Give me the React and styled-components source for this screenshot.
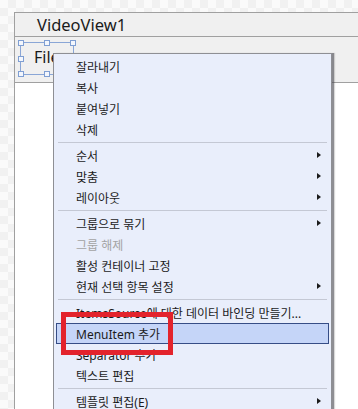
import React from 'react';
import styled, { createGlobalStyle } from 'styled-components';

const GlobalStyle = createGlobalStyle`
  html, body {
    margin: 0;
    padding: 0;
  }
  body {
    width: 358px;
    height: 409px;
    overflow: hidden;
    background-color: #fafafa;
    background-image: conic-gradient(#f1f1f1 25%, transparent 0 50%, #f1f1f1 0 75%, transparent 0);
    background-size: 16px 16px;
  }
`;

const Canvas = styled.div`
  position: relative;
  width: 358px;
  height: 409px;
  padding: 12px 0 0 14px;
  box-sizing: border-box;
  display: flex;
  overflow: hidden;
  font-family: "Noto Sans", "Noto Sans CJK KR", sans-serif;
`;

const Window = styled.div`
  flex: 1;
  display: flex;
  flex-direction: column;
  border-left: 1px solid #a0a0a0;
  border-top: 1px solid #a0a0a0;
  background: #f0f0f0;
`;

const TitleBar = styled.div`
  height: 23px;
  border-bottom: 1px solid #a0a0a0;
  padding-left: 22px;
  display: flex;
  align-items: center;
  font-size: 16.5px;
  color: #1a1a1a;
`;

const MenuBar = styled.div`
  position: relative;
  height: 45px;
  border-bottom: 1px solid #a0a0a0;
  display: flex;
  align-items: center;
  padding-left: 19px;
`;

const MenuHeader = styled.div`
  font-size: 16px;
  color: #1a1a1a;
  margin-top: -6px;
`;

const Body = styled.div`
  flex: 1;
  background: #ffffff;
`;

const Adorner = styled.div`
  position: absolute;
  left: 5px;
  top: 5px;
  width: 52px;
  height: 31px;
  border: 1px solid #8aa6d6;
`;

const Handle = styled.span`
  position: absolute;
  width: 4px;
  height: 4px;
  border: 1px solid #7f9fd3;
  background: #f4f7fd;
  left: ${({ x }) => x};
  top: ${({ y }) => y};
  transform: translate(-50%, -50%);
`;

const ContextMenu = styled.div`
  position: absolute;
  left: 53px;
  top: 53px;
  width: 277px;
  height: 380px;
  padding: 2px 0;
  background: #e9eefb;
  border: 1px solid #8e8f94;
  box-shadow: 2px 0 0 rgba(80, 80, 90, 0.55), 3px 0 1px rgba(0, 0, 0, 0.15);
  display: flex;
  flex-direction: column;
  font-family: "Noto Sans", "Noto Sans CJK KR", sans-serif;
  font-size: 12px;
`;

const Item = styled.div`
  position: relative;
  height: 21px;
  flex-shrink: 0;
  display: flex;
  align-items: center;
  margin: 0 2px;
  padding-left: 19px;
  box-sizing: border-box;
  color: ${({ disabled }) => (disabled ? '#a3a3a3' : '#1b1b1b')};
  background: ${({ active }) => (active ? '#c5d5f8' : 'transparent')};
  border: 1px solid ${({ active }) => (active ? '#364d86' : 'transparent')};
`;

const Arrow = styled.span`
  position: absolute;
  right: 7px;
  top: 50%;
  margin-top: -3.5px;
  width: 0;
  height: 0;
  border-top: 3.5px solid transparent;
  border-bottom: 3.5px solid transparent;
  border-left: 4px solid #1b1b1b;
`;

const Separator = styled.div`
  height: 5px;
  flex-shrink: 0;
  display: flex;
  align-items: center;
  padding: 0 4px;
  &::after {
    content: '';
    flex: 1;
    height: 1px;
    background: #c4c8d4;
  }
`;

const Callout = styled.div`
  position: absolute;
  left: 61px;
  top: 312px;
  width: 112px;
  height: 43px;
  box-sizing: border-box;
  border: 5px solid #e3232c;
`;

const groups = [
  [{ label: '잘라내기' }, { label: '복사' }, { label: '붙여넣기' }, { label: '삭제' }],
  [
    { label: '순서', sub: true },
    { label: '맞춤', sub: true },
    { label: '레이아웃', sub: true },
  ],
  [
    { label: '그룹으로 묶기', sub: true },
    { label: '그룹 해제', disabled: true },
    { label: '활성 컨테이너 고정' },
    { label: '현재 선택 항목 설정', sub: true },
  ],
  [
    { label: 'ItemsSource에 대한 데이터 바인딩 만들기...' },
    { label: 'MenuItem 추가', active: true },
    { label: 'Separator 추가' },
    { label: '텍스트 편집' },
  ],
  [{ label: '템플릿 편집(E)', sub: true }],
];

const handles = [
  ['0%', '0%'],
  ['50%', '0%'],
  ['100%', '0%'],
  ['0%', '50%'],
  ['0%', '100%'],
  ['50%', '100%'],
];

const App = () => {
  return (
    <>
      <GlobalStyle />
      <Canvas>
        <Window>
          <TitleBar>VideoView1</TitleBar>
          <MenuBar>
            <MenuHeader>File</MenuHeader>
            <Adorner>
              {handles.map(([x, y]) => (
                <Handle key={x + y} x={x} y={y} />
              ))}
            </Adorner>
          </MenuBar>
          <Body />
        </Window>
        <ContextMenu>
          {groups.map((group, gi) => (
            <React.Fragment key={gi}>
              {gi > 0 && <Separator />}
              {group.map((item) => (
                <Item key={item.label} disabled={item.disabled} active={item.active}>
                  {item.label}
                  {item.sub && <Arrow />}
                </Item>
              ))}
            </React.Fragment>
          ))}
        </ContextMenu>
        <Callout />
      </Canvas>
    </>
  );
};

export default App;
